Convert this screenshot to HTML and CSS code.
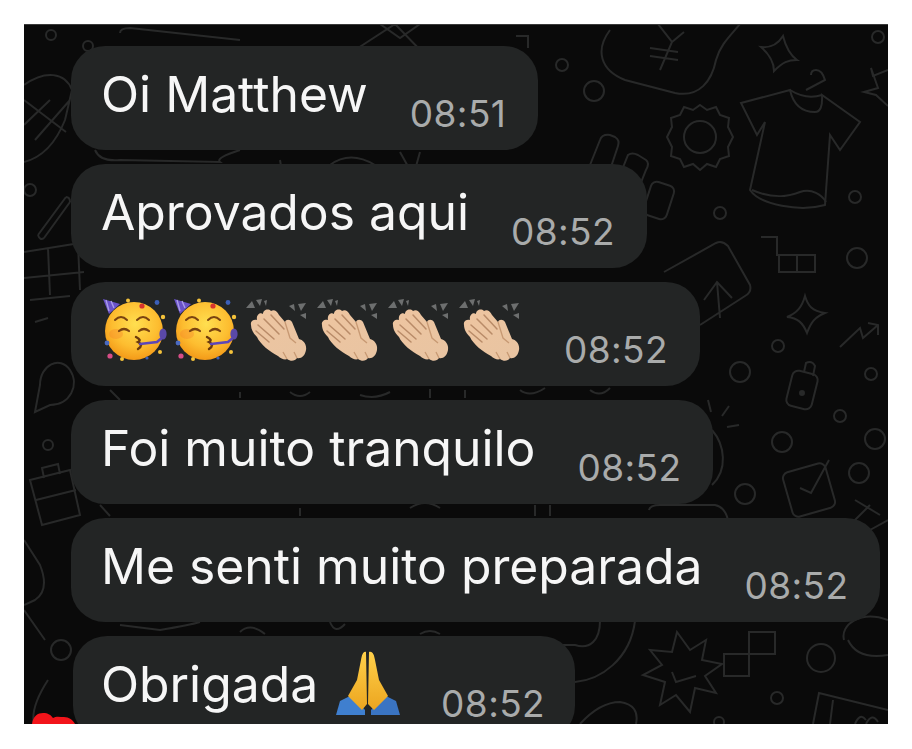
FILE: index.html
```html
<!DOCTYPE html>
<html lang="pt">
<head>
    <meta charset="UTF-8">
    <meta name="viewport" content="width=device-width, initial-scale=1.0">
    <title>Conversa</title>
    <link rel="stylesheet" href="styles.css">
</head>
<body>

    <!-- desenhos dos emojis -->
    <svg class="defs" width="0" height="0">
        <defs>
            <radialGradient id="face" cx="52%" cy="38%" r="66%">
                <stop offset="0" stop-color="#ffdf50"/>
                <stop offset="0.6" stop-color="#fdbd30"/>
                <stop offset="1" stop-color="#f29414"/>
            </radialGradient>
            <linearGradient id="skin" x1="0" y1="0" x2="1" y2="1">
                <stop offset="0" stop-color="#eec5a0"/>
                <stop offset="1" stop-color="#e8c4a2"/>
            </linearGradient>
            <linearGradient id="gold" x1="0" y1="0" x2="0" y2="1">
                <stop offset="0" stop-color="#ffd04a"/>
                <stop offset="1" stop-color="#eca51f"/>
            </linearGradient>
            <symbol id="party" viewBox="0 0 64 64">
                <circle cx="31" cy="33" r="29" fill="url(#face)"/>
                <ellipse cx="13" cy="36" rx="7" ry="5" fill="#f4772a" opacity=".3"/>
                <path d="M0 1 L17 6 L6 16 Z" fill="#6a52c8"/>
                <path d="M3 2 L6 13 M8 3 L11 10" stroke="#a99be8" stroke-width="1.4"/>
                <circle cx="25" cy="2.5" r="2" fill="#f5c33b"/>
                <circle cx="39" cy="8" r="2.6" fill="#d8342e"/>
                <circle cx="54" cy="4.5" r="2.4" fill="#3b5fb8"/>
                <circle cx="60" cy="19" r="2.2" fill="#f5c33b"/>
                <circle cx="4" cy="45" r="2.4" fill="#4a6ac0"/>
                <circle cx="7" cy="58" r="2.6" fill="#d64d86"/>
                <circle cx="19" cy="61" r="2" fill="#f5c33b"/>
                <circle cx="57" cy="54" r="2" fill="#f5c33b"/>
                <circle cx="44" cy="60" r="1.6" fill="#3b5fb8"/>
                <path d="M12 22 q6 -6 12 0 M34 22 q6 -6 12 0" fill="none" stroke="#7a4310" stroke-width="2" stroke-linecap="round"/>
                <path d="M16 33 q5 -4 10 0 M36 33 q5 -4 10 0" fill="none" stroke="#7a4310" stroke-width="2.2" stroke-linecap="round"/>
                <path d="M33 39 q6 3 2 5 q6 3 0 7" fill="none" stroke="#6b3a0c" stroke-width="2.4" stroke-linecap="round"/>
                <path d="M37 46 L54 44 L60 39" fill="none" stroke="#5d46b8" stroke-width="2.6" stroke-linecap="round"/>
                <ellipse cx="60" cy="36" rx="3.6" ry="5.6" fill="#5a49a8"/>
            </symbol>
            <symbol id="clap" viewBox="0 0 62 64">
                <g fill="#6d6f6f">
                    <path d="M0 10 L6 3 L9 10 Z"/><path d="M10 2 L16 1 L14 8 Z"/><path d="M18 3 L21 2 L20 8 Z"/>
                    <path d="M43 8 L48 6 L49 13 Z"/><path d="M52 6 L60 5 L55 13 Z"/><path d="M54 17 L60 15 L60 21 Z"/>
                </g>
                <path d="M5 27 C4 23 8 21 11 22 C10 17 14 14 17 16 C17 12 22 10 25 13 C28 11 31 13 33 17 L39 24 C40 21 44 21 46 24 L53 41 C57 42 61 46 60 52 C59 58 55 61 51 60 C49 63 45 64 41 61 C39 62 35 61 32 58 C24 54 14 46 11 39 C8 36 5 32 5 27 Z" fill="url(#skin)"/>
                <path d="M12 27 L28 41 M18 21 L33 36 M25 17 L38 31 M10 33 L23 44" stroke="#b98b68" stroke-width="1.5" stroke-linecap="round"/>
                <path d="M39 24 L44 40 L50 45" fill="none" stroke="#c79973" stroke-width="1.3"/>
                <path d="M41 61 L37 54 M51 60 L48 54" stroke="#c79973" stroke-width="1.3"/>
            </symbol>
            <symbol id="pray" viewBox="0 0 68 66">
                <path d="M2 65 L6 51 L18 45 L31 60 L31 65 Z" fill="#3f7fcf"/>
                <path d="M66 65 L62 51 L50 45 L37 60 L37 65 Z" fill="#3a74c2"/>
                <path d="M32 2 C29 1 28 5 27 10 L23 30 L14 46 L28 60 L33 54 Z" fill="url(#gold)"/>
                <path d="M35 2 C39 1 40 5 41 10 L45 30 L54 46 L40 60 L34 54 Z" fill="url(#gold)"/>
            </symbol>
        </defs>
    </svg>

    <div class="screen">
        <!-- papel de parede -->
        <svg class="wallpaper" width="864" height="700" viewBox="24 24 864 700" fill="none" stroke="#282929" stroke-width="2">
            <circle cx="51" cy="35" r="5"/><circle cx="88" cy="46" r="5"/><circle cx="30" cy="190" r="6"/>
            <path d="M24 85 C45 70 65 72 72 90 L65 120 C55 145 40 158 24 162 M24 100 L66 132 M24 125 L50 100 M35 140 L70 100"/>
            <path d="M38 235 L66 197 M44 238 L70 202 M38 235 Q40 241 44 238 M66 197 Q70 197 70 202"/>
            <path d="M24 252 L80 243 M24 278 L84 272 M48 248 L50 295 M78 244 L80 290"/>
            <path d="M120 33 Q120 28 130 28 L240 40 M95 150 Q100 162 120 160 L220 162 Q215 158 240 150"/>
            <path d="M355 50 L395 24 L425 55 M380 24 L400 38 L420 24"/>
            <path d="M280 160 L285 190 M330 165 Q350 150 375 165 M400 152 L410 170 M420 152 L415 170"/>
            <circle cx="562" cy="65" r="6"/><circle cx="594" cy="91" r="10"/><path d="M516 36 h12 v12"/>
            <path d="M610 30 C595 50 600 70 625 80 L675 93 C700 98 712 80 716 60 C720 45 730 36 740 24"/>
            <path d="M658 24 L672 42 L660 70 M684 32 L672 42 M650 48 L678 52 M650 56 L678 60"/>
            <path d="M783 36 C786 48 790 55 797 60 C788 60 783 62 774 71 C774 62 770 55 761 47 C770 48 778 44 783 36 Z"/>
            <circle cx="878" cy="37" r="6"/>
            <path d="M888 70 L873 76 L871 68 L878 88 L864 92 L876 95 L888 106"/>
            <path d="M741 103 L790 90 Q795 112 815 112 Q823 112 822 95 L860 122 L840 150 L830 135 L825 205 C800 212 760 205 750 190 L765 122 L757 135 Z"/>
            <path d="M752 190 C775 200 790 196 800 192 C812 188 822 195 826 202"/>
            <path d="M790 90 Q806 100 822 95 M806 90 L825 80 Q822 70 816 70 Q811 70 811 75"/>
            <circle cx="700" cy="137" r="16"/>
            <path d="M700 105 L707 110 L716 107 L720 115 L729 118 L728 127 L733 137 L728 147 L729 156 L720 159 L716 167 L707 164 L700 170 L693 164 L684 167 L680 159 L671 156 L672 147 L667 137 L672 127 L671 118 L680 115 L684 107 L693 110 Z"/>
            <path d="M590 165 L600 140 Q602 134 610 135 L615 137 Q620 140 618 146 L610 170 M622 170 L628 155 Q632 152 638 155 L646 160 Q650 163 646 170 L638 190"/>
            <rect x="647" y="183" width="24" height="35" rx="6" transform="rotate(18 659 200)"/>
            <circle cx="720" cy="213" r="6"/><circle cx="855" cy="197" r="6"/><circle cx="857" cy="258" r="10"/>
            <path d="M761 237 h16 v18 h38 v17 h-36 v-17 M797 255 v17"/>
            <path d="M664 272 L716 243 Q722 240 728 246 L750 285 Q752 292 745 296 L700 325 M704 300 L717 282 L732 298 M717 282 L720 318"/>
            <path d="M805 296 C808 306 812 311 825 313 C815 317 811 322 807 333 C803 323 798 318 787 317 C797 313 802 307 805 296 Z"/>
            <path d="M840 347 L860 328 L863 338 L878 325 M868 323 L878 325 L878 335"/>
            <circle cx="778" cy="346" r="6"/><circle cx="740" cy="372" r="10"/><circle cx="871" cy="374" r="6"/><circle cx="840" cy="416" r="6"/><circle cx="782" cy="442" r="10"/><circle cx="875" cy="439" r="10"/><circle cx="859" cy="473" r="10"/><circle cx="745" cy="494" r="10"/>
            <rect x="789" y="372" width="26" height="36" rx="6" transform="rotate(14 802 390)"/>
            <path d="M804 372 L806 363 Q812 360 815 366 L813 376"/>
            <circle cx="802" cy="393" r="2" fill="#282929"/>
            <path d="M708 400 L711 412 M729 406 L722 416 M739 425 L727 427 M712 430 C725 445 728 470 712 485"/>
            <rect x="787" y="467" width="44" height="46" rx="6" transform="rotate(-16 809 490)"/>
            <path d="M800 488 L811 493 L829 460"/>
            <path d="M649 510 Q650 505 660 505 L715 505 Q725 507 728 520"/>
            <path d="M845 530 L870 505 M855 500 L880 515 M888 520 L870 530"/>
            <path d="M635 621 C630 660 600 680 575 682 M600 621 C600 640 590 650 575 645 L540 645"/>
            <path d="M844 640 C840 625 860 610 888 620 M848 640 C855 655 870 658 888 655"/>
            <path d="M677 632 L690 650 L706 640 L702 660 L722 664 L705 676 L716 693 L695 688 L690 712 L676 695 L660 705 L665 682 L643 675 L662 665 L650 650 L672 652 Z"/>
            <path d="M672 672 L676 682 L696 676"/>
            <path d="M749 634 h26 v22 h-26 v22 h-25 v-22 h25 Z" transform="translate(0 -2)"/>
            <circle cx="821" cy="658" r="14"/><circle cx="777" cy="698" r="6"/><circle cx="719" cy="722" r="5"/>
            <path d="M813 724 L819 693 L888 710 M830 724 L833 700 M855 724 Q860 712 866 720 M866 724 Q872 712 878 722"/>
            <path d="M580 724 Q600 702 620 702 Q640 705 636 724"/>
            <circle cx="61" cy="650" r="10"/>
            <path d="M48 680 C35 700 32 715 34 724 M24 610 L45 640"/>
            <path d="M24 540 L40 565 Q50 590 35 600 L24 605"/>
            <path d="M30 480 L70 470 L80 515 L42 525 Z M44 478 L42 468 L58 464 L60 474 M36 500 L76 490"/>
            <path d="M40 385 C40 365 60 355 70 370 C80 385 70 405 50 405 L35 412 Z"/>
            <path d="M35 322 L48 318 M30 300 L70 296"/>
            <circle cx="48" cy="445" r="5"/>
            <path d="M110 390 L120 400 M240 392 L240 398 M290 392 Q300 400 310 392 M360 395 Q375 400 390 392 M430 389 L430 398 M465 390 L465 398 M520 390 Q530 398 545 388 M590 390 Q600 398 610 388"/>
            <path d="M100 505 L110 516 M300 508 L300 516 M410 508 Q425 498 440 508 M535 505 L535 516 M550 505 L550 516"/>
            <path d="M120 625 L160 630 Q190 625 200 622 M240 632 Q250 622 265 634 M330 622 Q335 635 345 624 M420 634 Q430 628 440 634"/>
        </svg>

        <div class="messages">
            <div class="bubble">
                <span class="text">Oi Matthew</span>
                <span class="time">08:51</span>
            </div>
            <div class="bubble">
                <span class="text">Aprovados aqui</span>
                <span class="time">08:52</span>
            </div>
            <div class="bubble">
                <span class="emojis">
                    <svg class="emoji"><use href="#party"/></svg>
                    <svg class="emoji"><use href="#party"/></svg>
                    <svg class="emoji"><use href="#clap"/></svg>
                    <svg class="emoji"><use href="#clap"/></svg>
                    <svg class="emoji"><use href="#clap"/></svg>
                    <svg class="emoji"><use href="#clap"/></svg>
                </span>
                <span class="time">08:52</span>
            </div>
            <div class="bubble">
                <span class="text">Foi muito tranquilo</span>
                <span class="time">08:52</span>
            </div>
            <div class="bubble">
                <span class="text">Me senti muito preparada</span>
                <span class="time">08:52</span>
            </div>
            <div class="bubble last">
                <span class="text">Obrigada</span>
                <svg class="pray"><use href="#pray"/></svg>
                <span class="time">08:52</span>
            </div>
        </div>

        <svg class="heart" width="44" height="12" viewBox="0 0 44 12"><path d="M0 12 C1 4 6 1 11 1 C16 1 19 3 21 6 C24 4 28 5 32 5 C37 5 41 8 43 12 Z" fill="#f2141a"/></svg>
    </div>

</body>
</html>
```
FILE: styles.css
```css
body {
    margin: 0;
    background: #fff;
    font-family: Inter, "Liberation Sans", sans-serif;
}

.defs {
    display: block;
}

.screen {
    position: relative;
    width: 864px;
    height: 700px;
    box-sizing: border-box;
    margin: 24px 0 0 24px;
    border-top: 1px solid #3a3a3a;
    background: #0a0a0a;
    overflow: hidden;
}

.wallpaper {
    position: absolute;
    top: -1px;
    left: 0;
}

.messages {
    position: relative;
    display: flex;
    flex-direction: column;
    align-items: flex-start;
    gap: 14px;
    padding: 21px 0 0 47px;
}

.bubble {
    display: flex;
    align-items: flex-start;
    height: 104px;
    box-sizing: border-box;
    padding: 18px 32px 0 30px;
    background: #232525;
    border-radius: 34px;
}

.last {
    margin-left: 2px;
    padding-left: 28px;
    padding-right: 30px;
}

.text {
    color: #f6f6f6;
    font-size: 49.8px;
    line-height: 60px;
    white-space: nowrap;
}

.time {
    margin: 30px 0 0 42px;
    color: #a9abab;
    font-size: 37px;
    line-height: 40px;
    letter-spacing: 0.4px;
}

.emojis {
    display: flex;
    gap: 7px;
    margin: -2px 0 0 2px;
}

.emoji {
    width: 64px;
    height: 64px;
}

.pray {
    width: 68px;
    height: 66px;
    margin: -4px -3px 0 16px;
}

.heart {
    position: absolute;
    left: 8px;
    bottom: 0;
}
```
